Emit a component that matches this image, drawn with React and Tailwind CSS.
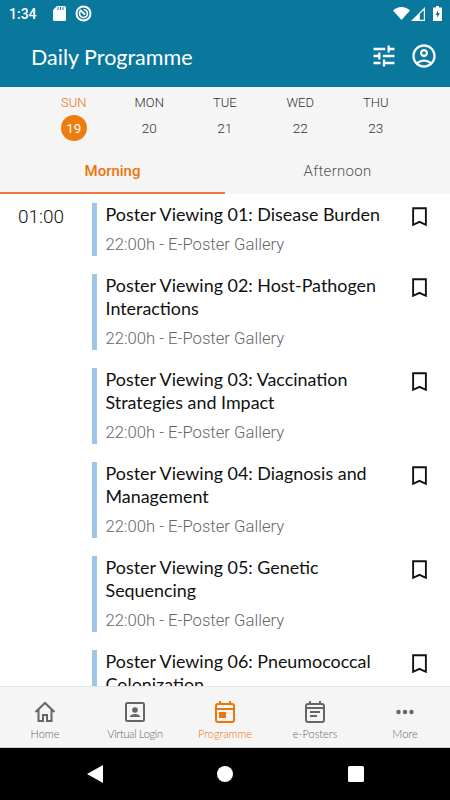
const cabin = "font-['Lato','Noto_Sans',sans-serif]";
const roboto = "font-['Roboto',sans-serif]";

const items = [
  ["Poster Viewing 01: Disease Burden"],
  ["Poster Viewing 02: Host-Pathogen", "Interactions"],
  ["Poster Viewing 03: Vaccination", "Strategies and Impact"],
  ["Poster Viewing 04: Diagnosis and", "Management"],
  ["Poster Viewing 05: Genetic", "Sequencing"],
  ["Poster Viewing 06: Pneumococcal", "Colonization"],
];
const days = [["SUN", "19"], ["MON", "20"], ["TUE", "21"], ["WED", "22"], ["THU", "23"]];

function Bookmark() {
  return (
    <svg width="15" height="20" viewBox="0 0 16 21" className="shrink-0" fill="none" stroke="#111" strokeWidth="2">
      <path d="M1.200 1.200h13.600v17.600L8 15.600 1.200 18.800z" />
    </svg>
  );
}

function NavItem({ label, active, tight, children }) {
  return (
    <div className={`flex-1 flex flex-col items-center ${active ? "text-[#f0740a]" : "text-[#666]"}`}>
      <div className="h-[27px] mt-[11px] flex items-center justify-center">{children}</div>
      <div className={`${cabin} text-[11px] leading-[14px] mt-[2px] font-light ${tight ? "tracking-[-0.3px]" : ""}`}>{label}</div>
    </div>
  );
}

export default function App() {
  return (
    <div className="w-[450px] h-[800px] flex flex-col overflow-hidden bg-white">
      <div className="bg-[#0a779c] text-white shrink-0 h-[87px]">
        <div className="h-[24px] flex items-center justify-between pl-[9px] pr-[8px] pt-[3px]">
          <div className="flex items-center">
            <span className={`${roboto} text-[14px] font-medium leading-none w-[44px]`}>1:34</span>
            <svg width="13" height="15" viewBox="0 0 13 15" fill="white">
              <path d="M4 0h7.500A1.500 1.500 0 0 1 13 1.500v12a1.500 1.500 0 0 1-1.500 1.500h-10A1.500 1.500 0 0 1 0 13.500V4z" />
              <path d="M5 1v3M7.500 1v3M10 1v3" stroke="#0a779c" strokeWidth="1" />
            </svg>
            <svg width="17" height="17" viewBox="0 0 17 17" fill="none" stroke="white" className="ml-[9px]">
              <circle cx="8.500" cy="8.500" r="7" strokeWidth="2" />
              <path d="M8.500 4.500a4 4 0 1 1-3.300 1.700" strokeWidth="1.600" />
              <path d="M5 5l5 4.500" strokeWidth="2" />
            </svg>
          </div>
          <div className="flex items-center">
            <svg width="17" height="13" viewBox="0 0 17 13" fill="white"><path d="M8.500 13L0 3.400C2.300 1.300 5.200 0 8.500 0S14.700 1.300 17 3.400z" /></svg>
            <svg width="14" height="14" viewBox="0 0 14 14" className="ml-[1px]" fill="white" fillRule="evenodd"><path d="M14 0v14H0zM12.800 3l-4 4v5.800h4z" /></svg>
            <svg width="9" height="15" viewBox="0 0 9 15" className="ml-[8px]" fill="white" fillRule="evenodd"><path d="M3 0h3v1.500h3V15H0V1.500h3zM5.200 4L2.500 9h1.800v3L6.800 7H5z" /></svg>
          </div>
        </div>
        <div className="h-[63px] flex items-center pl-[31px] pr-[12px]">
          <div className={`${cabin} text-[21.500px] leading-none flex-1 mt-[5px]`}>Daily Programme</div>
          <svg width="28" height="28" viewBox="0 0 24 24" fill="white" className="mr-[12px]">
            <path d="M3 17v2h6v-2H3zM3 5v2h10V5H3zm10 16v-2h8v-2h-8v-2h-2v6h2zM7 9v2H3v2h4v2h2V9H7zm14 4v-2H11v2h10zm-6-4h2V7h4V5h-4V3h-2v6z" />
          </svg>
          <svg width="28" height="28" viewBox="0 0 24 24" fill="white">
            <path d="M12 2C6.480 2 2 6.480 2 12s4.480 10 10 10 10-4.480 10-10S17.520 2 12 2zM7.350 18.500C8.660 17.560 10.260 17 12 17s3.340.560 4.650 1.500c-1.310.940-2.910 1.500-4.650 1.500s-3.340-.560-4.650-1.500zm10.790-1.380C16.450 15.800 14.320 15 12 15s-4.450.800-6.140 2.120C4.700 15.730 4 13.950 4 12c0-4.420 3.580-8 8-8s8 3.580 8 8c0 1.950-.700 3.730-1.860 5.120z" />
            <path d="M12 6c-1.930 0-3.500 1.570-3.500 3.500S10.070 13 12 13s3.500-1.570 3.500-3.500S13.930 6 12 6zm0 5c-.830 0-1.500-.670-1.500-1.500S11.170 8 12 8s1.500.670 1.500 1.500S12.830 11 12 11z" />
          </svg>
        </div>
      </div>

      <div className={`bg-[#f5f5f5] shrink-0 h-[107px] flex flex-col ${roboto}`}>
        <div className="flex pl-[36px] pr-[36px] pt-[8px] h-[66px]">
          {days.map(([d, n], i) => (
            <div key={d} className="w-[75.500px] flex flex-col items-center">
              <div className={`text-[13px] leading-[15px] font-light ${i === 0 ? "text-[#f0740a]" : "text-[#333]"}`}>{d}</div>
              <div className={`mt-[5px] w-[26px] h-[26px] rounded-full flex items-center justify-center text-[13.500px] ${i === 0 ? "bg-[#ef7c0e] text-white" : "text-[#333] font-light"}`}>{n}</div>
            </div>
          ))}
        </div>
        <div className="flex flex-1 text-[15px]">
          <div className="w-[225px] flex items-center justify-center border-b-2 border-[#f0763c] text-[#f0740a] font-medium pb-[3px]">Morning</div>
          <div className="w-[225px] flex items-center justify-center text-[#555] font-light pb-[5px] tracking-[0.3px]">Afternoon</div>
        </div>
      </div>

      <div className="flex-1 min-h-0 overflow-hidden flex">
        <div className={`${roboto} w-[92px] shrink-0 pl-[18px] pt-[12px] text-[19px] leading-[22px] font-light text-[#111]`}>01:00</div>
        <div className="flex-1 min-w-0 pt-[9px] pr-[23px] flex flex-col gap-[18px]">
          {items.map((lines) => (
            <div key={lines[0]} className="flex shrink-0">
              <div className="w-[5px] bg-[#9fc5e8] shrink-0" />
              <div className="flex-1 pl-[8.500px]">
                <div className={`${cabin} text-[17.900px] leading-[23px] text-[#111]`}>
                  {lines.map((l) => <div key={l}>{l}</div>)}
                </div>
                <div className={`${roboto} text-[16.700px] leading-[22px] font-light text-[#666] mt-[8px]`}>22:00h - E-Poster Gallery</div>
              </div>
              <div className="pt-[4px]"><Bookmark /></div>
            </div>
          ))}
        </div>
      </div>

      <div className="h-[62px] shrink-0 bg-[#f5f5f5] border-t border-[#e4e4e4] border-b border-b-[#ccc] flex">
        <NavItem label="Home">
          <svg width="22" height="22" viewBox="0 0 22 22" fill="none" stroke="currentColor" strokeWidth="2"><path d="M1.500 11L11 2l9.500 9M4.500 9v11h4.500v-6h4v6h4.500V9" /></svg>
        </NavItem>
        <NavItem label="Virtual Login" tight>
          <svg width="20" height="20" viewBox="0 0 20 20" fill="currentColor">
            <rect x="1" y="1" width="18" height="18" rx="1.500" fill="none" stroke="currentColor" strokeWidth="2" />
            <circle cx="10" cy="8" r="2.800" /><path d="M4.500 15c.800-2 3-3 5.500-3s4.700 1 5.500 3z" />
          </svg>
        </NavItem>
        <NavItem label="Programme" active>
          <svg width="20" height="22" viewBox="0 0 20 22" fill="none" stroke="currentColor" strokeWidth="2">
            <rect x="1" y="3" width="18" height="18" rx="2" />
            <path d="M1 8h18M5 0v4M15 0v4" />
            <rect x="4" y="11" width="7" height="6" fill="currentColor" stroke="none" />
          </svg>
        </NavItem>
        <NavItem label="e-Posters">
          <svg width="20" height="22" viewBox="0 0 20 22" fill="none" stroke="currentColor" strokeWidth="2">
            <rect x="1" y="3" width="18" height="18" rx="2" />
            <path d="M1 7h18M5 0v3M15 0v3M5 11h10M5 15h7" />
          </svg>
        </NavItem>
        <NavItem label="More">
          <svg width="18" height="6" viewBox="0 0 18 6" fill="currentColor"><circle cx="2.500" cy="3" r="2.200" /><circle cx="9" cy="3" r="2.200" /><circle cx="15.500" cy="3" r="2.200" /></svg>
        </NavItem>
      </div>

      <div className="h-[52px] shrink-0 bg-black flex items-center justify-center">
        <div className="flex items-center justify-between w-[277px]">
          <svg width="16" height="18" viewBox="0 0 16 18" fill="white"><path d="M0 9l16-9v18z" /></svg>
          <svg width="16" height="16" viewBox="0 0 16 16" fill="white"><circle cx="8" cy="8" r="8" /></svg>
          <svg width="16" height="16" viewBox="0 0 16 16" fill="white"><rect width="16" height="16" rx="1.500" /></svg>
        </div>
      </div>
    </div>
  );
}
